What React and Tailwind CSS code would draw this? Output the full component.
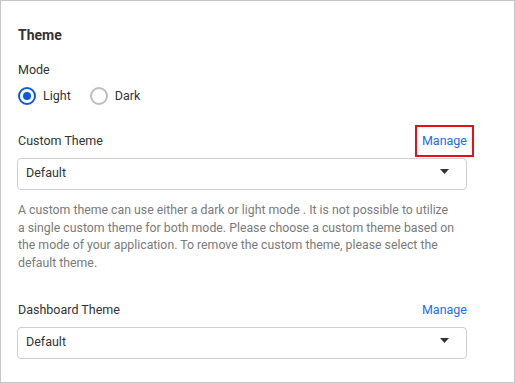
import React from "react";

const font = { fontFamily: "Roboto, 'Liberation Sans', sans-serif" };

const Radio = ({ checked, label }) => (
  <label className="flex items-center gap-[7px]">
    <span
      className={
        checked
          ? "w-[18px] h-[18px] rounded-full border-2 border-[#0b5cd5] flex items-center justify-center"
          : "w-[18px] h-[18px] rounded-full border-2 border-[#bdbdbd]"
      }
    >
      {checked && <span className="w-[8px] h-[8px] rounded-full bg-[#0b5cd5]" />}
    </span>
    <span className="text-[12.5px] text-[#333]">{label}</span>
  </label>
);

const Select = ({ value }) => (
  <div className="w-[450px] h-[32px] border border-[#cfcfcf] rounded-[4px] flex items-center justify-between pl-[8px] pr-[17px]">
    <span className="text-[12.5px] text-[#333]">{value}</span>
    <svg width="9" height="5" viewBox="0 0 9 5" className="-mt-[4px]">
      <path d="M0 0 H9 L4.5 5 Z" fill="#333" />
    </svg>
  </div>
);

export default function App() {
  return (
    <div
      className="w-[515px] h-[383px] border border-[#c6c6c6] bg-white pl-[16px] pt-[25px]"
      style={font}
    >
      <h2 className="pl-[1px] text-[14px] font-bold text-[#333] leading-[18px]">Theme</h2>

      <p className="mt-[18px] pl-[1px] text-[12.5px] text-[#333] leading-[16px]">Mode</p>
      <div className="mt-[9px] pl-[1px] flex items-center gap-[19px]">
        <Radio checked label="Light" />
        <Radio label="Dark" />
      </div>

      <div className="mt-[27px] w-[450px] pl-[1px] flex items-center justify-between">
        <span className="text-[12.5px] text-[#333] leading-[16px]">Custom Theme</span>
        <span className="border-2 border-[#e2121d] px-[5px] py-[6px] -my-[8px] -mr-[7px] text-[12.5px] text-[#1a6ef0] leading-[16px]">
          Manage
        </span>
      </div>
      <div className="mt-[9px]">
        <Select value="Default" />
      </div>

      <p className="mt-[12px] pl-[1px] w-[470px] text-[12.3px] text-[#7a7a7a] leading-[17.75px]">
        A custom theme can use either a dark or light mode . It is not possible to utilize
        <br />
        a single custom theme for both mode. Please choose a custom theme based on
        <br />
        the mode of your application. To remove the custom theme, please select the
        <br />
        default theme.
      </p>

      <div className="mt-[29px] w-[450px] pl-[1px] flex items-center justify-between">
        <span className="text-[12.5px] text-[#333] leading-[16px]">Dashboard Theme</span>
        <span className="text-[12.5px] text-[#1a6ef0] leading-[16px]">Manage</span>
      </div>
      <div className="mt-[9px]">
        <Select value="Default" />
      </div>
    </div>
  );
}
